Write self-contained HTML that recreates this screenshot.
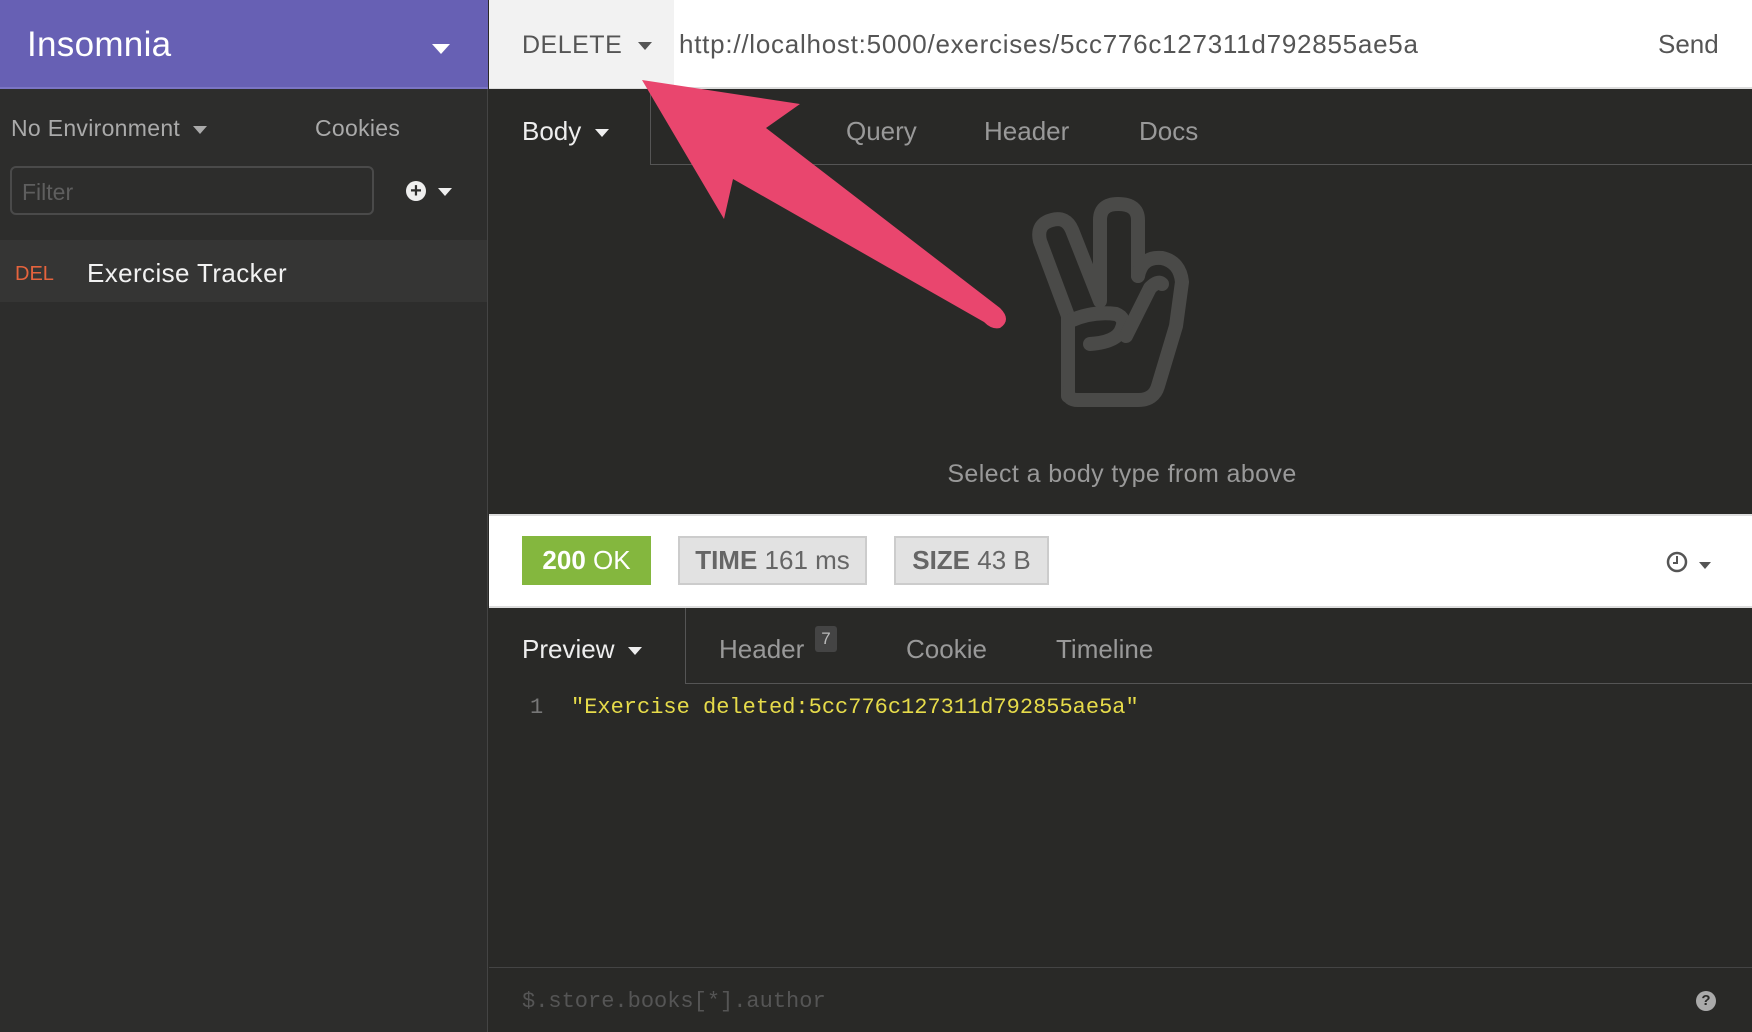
<!DOCTYPE html>
<html><head><meta charset="utf-8"><style>
*{margin:0;padding:0;box-sizing:border-box}
body{width:1752px;height:1032px;overflow:hidden;background:#292927;font-family:"Liberation Sans",sans-serif;position:relative}
.a{position:absolute;white-space:nowrap}
.tri{display:inline-block;width:0;height:0;border-left:7px solid transparent;border-right:7px solid transparent;border-top:8px solid currentColor;vertical-align:middle}
</style></head><body>
<div class="a" style="left:0;top:0;width:488px;height:1032px;background:#2d2d2c;border-right:1px solid #444"></div>
<div class="a" style="left:0;top:0;width:488px;height:89px;background:#6760b4;border-bottom:2px solid #7b75c4"></div>
<div class="a" style="left:27px;top:25px;font-size:35px;color:#fff;letter-spacing:0.3px">Insomnia</div>
<div class="a" style="left:432px;top:40px;color:#fff"><span class="tri" style="border-left-width:9px;border-right-width:9px;border-top-width:10px"></span></div>
<div class="a" style="left:11px;top:115px;font-size:23px;color:#aaa;letter-spacing:0.3px">No Environment <span class="tri" style="margin-left:6px"></span></div>
<div class="a" style="left:315px;top:115px;font-size:23px;color:#aaa;letter-spacing:0.3px">Cookies</div>
<div class="a" style="left:10px;top:166px;width:364px;height:49px;border:2px solid #4a4a4a;border-radius:6px"></div>
<div class="a" style="left:22px;top:179px;font-size:23px;color:#5e5e5e">Filter</div>
<div class="a" style="left:406px;top:181px;width:20px;height:20px;border-radius:50%;background:#eee;color:#2d2d2c;font-size:20px;font-weight:bold;line-height:20px;text-align:center">+</div>
<div class="a" style="left:438px;top:183px;color:#eee"><span class="tri"></span></div>
<div class="a" style="left:0;top:240px;width:487px;height:62px;background:#353534"></div>
<div class="a" style="left:15px;top:263px;font-size:20px;color:#e5633d">DEL</div>
<div class="a" style="left:87px;top:258px;font-size:26px;color:#f2f2f2;letter-spacing:0.4px">Exercise Tracker</div>
<div class="a" style="left:489px;top:0;width:1263px;height:89px;background:#fff;border-bottom:2px solid #ddd"></div>
<div class="a" style="left:489px;top:0;width:185px;height:88px;background:#f2f2f2"></div>
<div class="a" style="left:522px;top:31px;font-size:25px;color:#555;letter-spacing:0.5px">DELETE <span class="tri" style="margin-left:8px;color:#555"></span></div>
<div class="a" style="left:679px;top:29px;font-size:26px;color:#555;letter-spacing:0.75px">http://localhost:5000/exercises/5cc776c127311d792855ae5a</div>
<div class="a" style="left:1658px;top:29px;font-size:26px;color:#555">Send</div>
<div class="a" style="left:650px;top:89px;width:1102px;height:76px;border-left:1px solid #555;border-bottom:1px solid #555"></div>
<div class="a" style="left:522px;top:116px;font-size:26px;color:#eee">Body <span class="tri" style="margin-left:6px"></span></div>
<div class="a" style="left:846px;top:116px;font-size:26px;color:#999">Query</div>
<div class="a" style="left:984px;top:116px;font-size:26px;color:#999">Header</div>
<div class="a" style="left:1139px;top:116px;font-size:26px;color:#999">Docs</div>
<svg class="a" style="left:1030px;top:196px" width="190" height="215" viewBox="0 0 190 215">
<g fill="none" stroke="#4a4a48" stroke-width="14" stroke-linejoin="round" stroke-linecap="round">
<path d="M38 200 L38 120 L10 45 Q6 28 22 24 Q36 20 42 34 L70 105 L70 24 Q70 8 88 8 Q108 8 108 24 L108 80"/>
<path d="M108 80 Q112 60 132 62 Q150 66 152 86 L146 130 L128 190 Q124 204 108 204 L48 204 Q38 204 38 196"/>
<path d="M40 125 Q62 115 86 118 Q96 122 92 132 Q88 146 60 148"/>
<path d="M132 88 Q128 84 120 92 L96 140"/>
</g></svg>
<div class="a" style="left:922px;top:460px;width:400px;text-align:center;font-size:25px;color:#999;letter-spacing:0.4px">Select a body type from above</div>
<div class="a" style="left:489px;top:514px;width:1263px;height:94px;background:#fff;border-top:2px solid #ddd;border-bottom:2px solid #ddd"></div>
<div class="a" style="left:522px;top:536px;width:129px;height:49px;background:#84b73e;color:#fff;font-size:26px;line-height:49px;text-align:center"><b>200</b> OK</div>
<div class="a" style="left:678px;top:536px;width:189px;height:49px;background:#e2e2e2;border:2px solid #ccc;color:#666;font-size:26px;line-height:45px;text-align:center"><b>TIME</b> 161 ms</div>
<div class="a" style="left:894px;top:536px;width:155px;height:49px;background:#e2e2e2;border:2px solid #ccc;color:#666;font-size:26px;line-height:45px;text-align:center"><b>SIZE</b> 43 B</div>
<svg class="a" style="left:1666px;top:551px" width="22" height="22"><circle cx="11" cy="11" r="9" fill="none" stroke="#555" stroke-width="2.5"/><path d="M11 5 V12 H7" fill="none" stroke="#555" stroke-width="2"/></svg>
<div class="a" style="left:1699px;top:557px;color:#555"><span class="tri" style="border-left-width:6px;border-right-width:6px;border-top-width:7px"></span></div>
<div class="a" style="left:685px;top:608px;width:1067px;height:76px;border-left:1px solid #555;border-bottom:1px solid #555"></div>
<div class="a" style="left:522px;top:634px;font-size:26px;color:#eee">Preview <span class="tri" style="margin-left:6px"></span></div>
<div class="a" style="left:719px;top:634px;font-size:26px;color:#999">Header</div>
<div class="a" style="left:815px;top:626px;width:22px;height:26px;background:#444;border-radius:3px;color:#bbb;font-size:17px;text-align:center;line-height:26px">7</div>
<div class="a" style="left:906px;top:634px;font-size:26px;color:#999">Cookie</div>
<div class="a" style="left:1056px;top:634px;font-size:26px;color:#999">Timeline</div>
<div class="a" style="left:530px;top:695px;font-family:'Liberation Mono',monospace;font-size:22px;color:#777">1</div>
<div class="a" style="left:571px;top:695px;font-family:'Liberation Mono',monospace;font-size:22px;color:#e6db4a">"Exercise deleted:5cc776c127311d792855ae5a"</div>
<div class="a" style="left:489px;top:967px;width:1263px;height:1px;background:#444"></div>
<div class="a" style="left:522px;top:989px;font-family:'Liberation Mono',monospace;font-size:22px;color:#555">$.store.books[*].author</div>
<div class="a" style="left:1696px;top:991px;width:20px;height:20px;border-radius:50%;background:#aaa;color:#292927;font-size:15px;font-weight:bold;text-align:center;line-height:20px">?</div>
<svg class="a" style="left:0;top:0" width="1752" height="1032">
<path d="M642 80 L800 104 L766 128 L1000 308 Q1012 320 1000 328 Q992 330 984 322 L733 179 L724 219 Z" fill="#e9466e"/>
</svg>
</body></html>
